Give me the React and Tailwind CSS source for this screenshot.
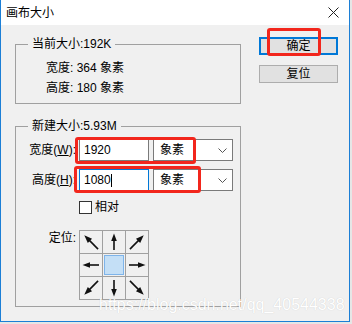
import React from 'react'

const font = { fontFamily: '"Liberation Sans", "Noto Sans CJK SC", sans-serif' }

const Arrow = ({ rot, diag }) => (
  <svg width="22" height="22" viewBox="0 0 22 22">
    <g transform={`rotate(${rot} 11 11)`}>
      <line x1="11" y1={diag ? 21 : 19} x2="11" y2="8" stroke="#111" strokeWidth="1.6" />
      <polygon points={diag ? '11,1.5 8,9.5 14,9.5' : '11,2.5 8.2,10 13.8,10'} fill="#111" />
    </g>
  </svg>
)

const cells = [-45, 0, 45, -90, null, 90, -135, 180, 135]

const Chevron = () => (
  <svg width="9" height="5" viewBox="0 0 9 5">
    <polyline points="0.5,0.5 4.5,4.5 8.5,0.5" fill="none" stroke="#555" strokeWidth="1" />
  </svg>
)

const App = () => {
  return (
    <div className="w-[352px] h-[324px] bg-[#e6e6e6] text-[12px] leading-[12px] text-black" style={font}>
      <div className="relative w-[350px] h-[322px] border-x border-b border-[#1c7fd6] bg-[#f0f0f0] flex flex-col">
        {/* Title bar */}
        <div className="h-[25px] bg-white flex items-center justify-between pl-[5px] pr-[10px]">
          <span className="text-[12px]">画布大小</span>
          <svg width="11" height="11" viewBox="0 0 11 11">
            <line x1="0.5" y1="0.5" x2="10.5" y2="10.5" stroke="#222" strokeWidth="1" />
            <line x1="10.5" y1="0.5" x2="0.5" y2="10.5" stroke="#222" strokeWidth="1" />
          </svg>
        </div>

        {/* Body */}
        <div className="flex pt-[12px] pl-[14px]">
          <div className="w-[226px] mt-[1px] flex flex-col gap-[16px]">
            <fieldset className="border border-[#a0a0a0] pb-[5px]">
              <legend className="ml-[12px] px-[4px] h-[12px]">当前大小:192K</legend>
              <div className="mt-[8px] pl-[30px] h-[20px] flex items-center">宽度: 364 象素</div>
              <div className="pl-[30px] h-[20px] flex items-center">高度: 180 象素</div>
            </fieldset>

            <fieldset className="border border-[#a0a0a0] pb-[6px]">
              <legend className="ml-[12px] px-[4px] h-[12px]">新建大小:5.93M</legend>
              <div className="mt-[7px] flex items-center h-[22px]">
                <div className="w-[60px] text-right">宽度(<span className="underline">W</span>):</div>
                <div className="ml-[3px] w-[70px] h-[22px] bg-white border border-[#7a7a7a] flex items-center pl-[4px]">1920</div>
                <div className="ml-[4px] w-[80px] h-[22px] bg-white border border-[#7a7a7a] flex items-center justify-between pl-[6px] pr-[5px]">
                  <span>象素</span>
                  <Chevron />
                </div>
              </div>
              <div className="mt-[8px] flex items-center h-[22px]">
                <div className="w-[60px] text-right">高度(<span className="underline">H</span>):</div>
                <div className="ml-[3px] w-[70px] h-[22px] bg-white border border-[#0078d7] flex items-center pl-[4px]">
                  1080<span className="inline-block w-px h-[13px] bg-black" />
                </div>
                <div className="ml-[4px] w-[80px] h-[22px] bg-white border border-[#7a7a7a] flex items-center justify-between pl-[6px] pr-[5px]">
                  <span>象素</span>
                  <Chevron />
                </div>
              </div>
              <div className="mt-[8px] h-[16px] flex items-center pl-[63px] gap-[3px]">
                <div className="w-[13px] h-[13px] bg-white border border-[#333]" />
                <span>相对</span>
              </div>
              <div className="mt-[15px] flex items-start">
                <div className="w-[60px] text-right mt-[2px]">定位:</div>
                <div className="ml-[3px] grid grid-cols-[repeat(3,23px)] border-l border-t border-[#a0a0a0]">
                  {cells.map((r, i) =>
                    r === null ? (
                      <div key={i} className="w-[23px] h-[23px] border-r border-b border-[#a0a0a0] p-px">
                        <div className="w-full h-full bg-[#c4dff6] border border-[#7eb4ea]" />
                      </div>
                    ) : (
                      <div key={i} className="w-[23px] h-[23px] border-r border-b border-[#a0a0a0] flex items-center justify-center">
                        <Arrow rot={r} diag={r % 90 !== 0} />
                      </div>
                    )
                  )}
                </div>
              </div>
            </fieldset>
          </div>

          <div className="ml-[18px] w-[79px] flex flex-col gap-[10px]">
            <div className="h-[18px] bg-[#e1e1e1] border-2 border-[#0078d7] flex items-center justify-center">确定</div>
            <div className="h-[18px] bg-[#e1e1e1] border border-[#adadad] flex items-center justify-center">复位</div>
          </div>
        </div>

        {/* annotations */}
        <div className="absolute left-[266px] top-[28px] w-[54px] h-[28px] border-[3px] border-[#f2261c] rounded-[3px]" />
        <div className="absolute left-[74px] top-[137px] w-[121px] h-[27px] border-[3px] border-[#f2261c] rounded-[3px]" />
        <div className="absolute left-[73px] top-[166px] w-[127px] h-[27px] border-[3px] border-[#f2261c] rounded-[3px]" />

        {/* watermark */}
        <div className="absolute left-[98px] top-[297px] text-[16px] leading-[16px] text-white [text-shadow:0_0_1px_rgba(0,0,0,0.18)] whitespace-nowrap">
          https://blog.csdn.net/qq_40544338
        </div>
      </div>
    </div>
  )
}

export default App
